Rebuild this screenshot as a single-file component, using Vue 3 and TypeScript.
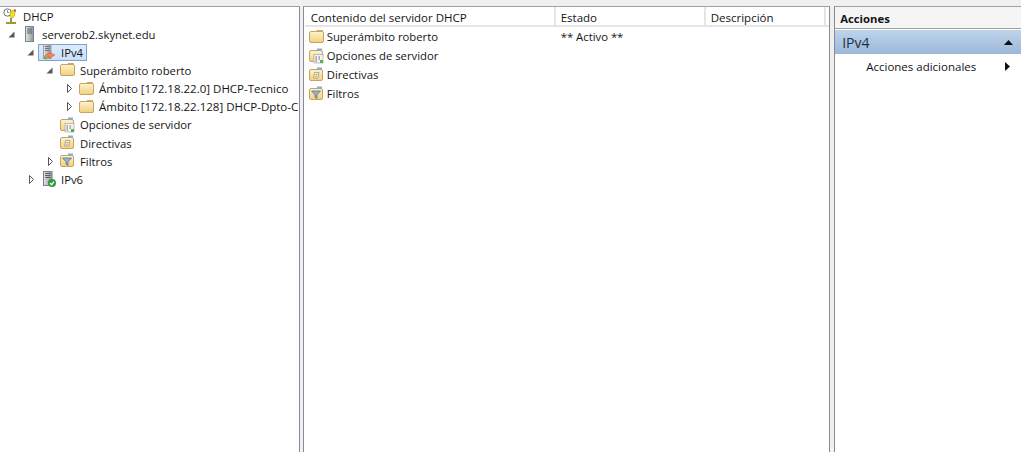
<script setup lang="ts">
type Arrow = 'open' | 'closed' | null

interface TreeRow {
  level: number
  arrow: Arrow
  icon: string
  label: string
  selected?: boolean
  wide?: boolean
}

const tree: TreeRow[] = [
  { level: 0, arrow: null, icon: 'dhcp', label: 'DHCP' },
  { level: 1, arrow: 'open', icon: 'server', label: 'serverob2.skynet.edu' },
  { level: 2, arrow: 'open', icon: 'ipv4', label: 'IPv4', selected: true },
  { level: 3, arrow: 'open', icon: 'folder', label: 'Superámbito roberto' },
  { level: 4, arrow: 'closed', icon: 'folder', label: 'Ámbito [172.18.22.0] DHCP-Tecnico', wide: true },
  { level: 4, arrow: 'closed', icon: 'folder', label: 'Ámbito [172.18.22.128] DHCP-Dpto-C', wide: true },
  { level: 3, arrow: null, icon: 'options', label: 'Opciones de servidor' },
  { level: 3, arrow: null, icon: 'policy', label: 'Directivas' },
  { level: 3, arrow: 'closed', icon: 'filter', label: 'Filtros' },
  { level: 2, arrow: 'closed', icon: 'ipv6', label: 'IPv6' },
]

const items = [
  { icon: 'folder', name: 'Superámbito roberto', state: '** Activo **' },
  { icon: 'options', name: 'Opciones de servidor', state: '' },
  { icon: 'policy', name: 'Directivas', state: '' },
  { icon: 'filter', name: 'Filtros', state: '' },
]

const indent = (row: TreeRow) => (row.level === 0 ? 3 : row.level * 19 - 13)
</script>

<template>
  <div class="console">
    <svg class="defs" width="0" height="0">
      <defs>
        <linearGradient id="fold" x1="0" y1="0" x2="0" y2="1">
          <stop offset="0" stop-color="#fdf3d0" />
          <stop offset="1" stop-color="#f2d07e" />
        </linearGradient>
        <linearGradient id="tower" x1="0" y1="0" x2="1" y2="0">
          <stop offset="0" stop-color="#e4e7ea" />
          <stop offset="1" stop-color="#8b939b" />
        </linearGradient>
        <symbol id="i-folder" viewBox="0 0 16 16">
          <path d="M8 3V1.500h5.500V3z" fill="#f6e3b0" stroke="#c9ab6a" />
          <rect x="0.500" y="2.500" width="14" height="11" rx="1.500" fill="url(#fold)" stroke="#c8a55e" />
        </symbol>
        <symbol id="i-options" viewBox="0 0 16 16">
          <rect x="0.500" y="2.500" width="13" height="11" rx="1.500" fill="url(#fold)" stroke="#c8a55e" />
          <rect x="8" y="0.500" width="5" height="2" fill="#7fb0dc" />
          <rect x="5" y="6.500" width="9" height="8.500" fill="#f4f4f4" stroke="#9a9a9a" stroke-width=".6" />
          <path d="M6.500 9h1.500M9.500 9h1.500M6.500 11h1.500M9.500 11h1.500M6.500 13h1.500" stroke="#666" />
          <rect x="11" y="12" width="3" height="3" fill="#58b24c" />
        </symbol>
        <symbol id="i-policy" viewBox="0 0 16 16">
          <rect x="0.500" y="2.500" width="13" height="11" rx="1.500" fill="url(#fold)" stroke="#c8a55e" />
          <rect x="8" y="0.500" width="5" height="2" fill="#7fb0dc" />
          <path d="M5.500 5.500h4.500l-1 5.500H4.500z" fill="#f8f3e4" stroke="#a8966e" stroke-width=".8" />
          <path d="M6.500 7.500h2M6 9.200h2" stroke="#8a7a5a" stroke-width=".7" />
        </symbol>
        <symbol id="i-filter" viewBox="0 0 16 16">
          <rect x="0.500" y="2.500" width="13" height="11" rx="1.500" fill="url(#fold)" stroke="#c8a55e" />
          <rect x="8" y="0.500" width="5" height="2" fill="#7fb0dc" />
          <path d="M2.500 5h9L8 8.800v3.700L6 11.200V8.800z" fill="#9fb2c4" stroke="#5f7286" stroke-width=".8" />
        </symbol>
        <symbol id="i-server" viewBox="0 0 16 16">
          <rect x="3.500" y="0.500" width="8" height="15" fill="url(#tower)" stroke="#7b828a" />
          <path d="M5 3h5M5 5h5M5 7h5" stroke="#5a6168" />
          <rect x="9" y="12.500" width="2" height="2" fill="#66c94a" />
        </symbol>
        <symbol id="i-ipv4" viewBox="0 0 16 16">
          <rect x="2.500" y="0.500" width="7.500" height="14" fill="url(#tower)" stroke="#9aa0a7" />
          <path d="M4 2.500h4.500M4 4.500h4.500M4 6.500h4.500" stroke="#6a7178" />
          <path d="M3 15c0-3.500 2-5.500 5-5.500V8l6 3-6 3.500v-2c-2 0-3.500.8-5 2.500z" fill="#ee8458" stroke="#d0633a" stroke-width=".5" />
          <circle cx="5" cy="14" r="1.500" fill="#66b85a" />
        </symbol>
        <symbol id="i-ipv6" viewBox="0 0 16 16">
          <rect x="2.500" y="0.500" width="8.500" height="14" fill="url(#tower)" stroke="#7b828a" />
          <path d="M4 2.500h5.500M4 4.500h5.500M4 6.500h5.500" stroke="#5a6168" />
          <circle cx="11" cy="12" r="4" fill="#2f9a3a" />
          <path d="M9 12l1.600 1.700 2.400-3" fill="none" stroke="#fff" stroke-width="1.300" />
        </symbol>
        <symbol id="i-dhcp" viewBox="0 0 16 16">
          <circle cx="4.500" cy="4.500" r="3.700" fill="#fff" stroke="#707070" />
          <path d="M4.500 2.200v2.300h1.800" fill="none" stroke="#707070" stroke-width=".8" />
          <path d="M7 6l2.500-4 2.500.5-.5 5-2 2.500-2.500-1.500z" fill="#f4e416" stroke="#a09a00" stroke-width=".6" />
          <rect x="11" y="1.500" width="2" height="2" fill="#e04030" />
          <path d="M8 10v4" stroke="#7a7a30" stroke-width="1.600" />
          <path d="M3 15h10" stroke="#8f8f20" stroke-width="1.800" />
        </symbol>
      </defs>
    </svg>

    <aside class="pane tree">
      <div v-for="row in tree" :key="row.label" class="tree-row" :style="{ paddingLeft: indent(row) + 'px' }">
        <span v-if="row.level > 0" class="arrow-slot">
          <svg v-if="row.arrow === 'open'" class="arrow-open" width="7" height="7" viewBox="0 0 7 7">
            <path d="M6.500 0.500V6.500H0.500z" fill="#595959" />
          </svg>
          <svg v-else-if="row.arrow === 'closed'" class="arrow-closed" width="5" height="9" viewBox="0 0 5 9">
            <path d="M0.500 0.500L4.500 4.500L0.500 8.500z" fill="#fff" stroke="#555" />
          </svg>
        </span>
        <span class="node" :class="{ selected: row.selected, wide: row.wide }">
          <svg class="icon" width="16" height="16"><use :href="'#i-' + row.icon" /></svg>
          <span class="node-label">{{ row.label }}</span>
        </span>
      </div>
    </aside>

    <main class="pane list">
      <div class="list-head">
        <div class="col col-name">Contenido del servidor DHCP</div>
        <div class="col col-state">Estado</div>
        <div class="col col-desc">Descripción</div>
      </div>
      <div v-for="item in items" :key="item.name" class="list-row">
        <div class="cell-name">
          <svg class="icon" width="16" height="16"><use :href="'#i-' + item.icon" /></svg>
          <span>{{ item.name }}</span>
        </div>
        <div class="cell-state">{{ item.state }}</div>
      </div>
    </main>

    <aside class="pane actions">
      <div class="actions-title">Acciones</div>
      <div class="actions-band">
        <span>IPv4</span>
        <svg width="9" height="5" viewBox="0 0 9 5"><path d="M4.500 0L9 5H0z" fill="#111" /></svg>
      </div>
      <div class="actions-item">
        <span>Acciones adicionales</span>
        <svg width="5" height="9" viewBox="0 0 5 9"><path d="M0 0L5 4.500L0 9z" fill="#111" /></svg>
      </div>
    </aside>
  </div>
</template>

<style>
html,
body {
  margin: 0;
  background: #f0f0f0;
}
</style>

<style scoped>
.defs {
  position: absolute;
}

.console {
  display: flex;
  gap: 3px;
  width: 1021px;
  height: 452px;
  padding-top: 6px;
  box-sizing: border-box;
  overflow: hidden;
  background: #f0f0f0;
  font-family: "Open Sans", "Liberation Sans", sans-serif;
  font-size: 11.3px;
  color: #141414;
}

.pane {
  background: #fff;
  box-sizing: border-box;
  border-top: 1px solid #a0a0a0;
  overflow: hidden;
}

.tree {
  width: 300px;
  border-right: 1px solid #8a8a96;
}

.list {
  width: 528px;
  border-left: 1px solid #8a8a96;
  border-right: 1px solid #8a8a96;
  padding-left: 1px;
}

.actions {
  width: 187px;
  margin-left: 1px;
  border-left: 1px solid #8a8a96;
}

.tree-row {
  display: flex;
  align-items: center;
  height: 18.15px;
  white-space: nowrap;
}

.arrow-slot {
  display: flex;
  align-items: center;
  flex: none;
  width: 16px;
}

.arrow-open {
  margin-left: 2px;
}

.arrow-closed {
  margin-left: 4px;
}

.node {
  display: flex;
  align-items: center;
  gap: 4px;
  height: 17px;
  box-sizing: border-box;
}

.node.wide {
  font-size: 11.5px;
}

.icon {
  flex: none;
}

.node.selected {
  margin-left: -3px;
  padding: 0 3px 0 2px;
  border: 1px solid #7da2ce;
  background: linear-gradient(#dcebfc, #c9e0f9);
}

.list-head {
  display: flex;
  height: 18px;
  border-bottom: 2px solid #e5e5e5;
  font-size: 11.5px;
}

.col {
  box-sizing: border-box;
  padding: 1px 0 0 5px;
  line-height: 19px;
  border-right: 2px solid #e5e5e5;
}

.col-name {
  width: 251px;
  padding-left: 6px;
}

.col-state {
  width: 150px;
}

.col-desc {
  width: 120px;
}

.list-row {
  display: flex;
  align-items: center;
  height: 19px;
}

.cell-name {
  display: flex;
  align-items: center;
  gap: 2px;
  width: 251px;
  padding-left: 4px;
  box-sizing: border-box;
}

.cell-state {
  padding-left: 5px;
}

.actions-title {
  height: 21px;
  line-height: 23px;
  padding-left: 5px;
  font-weight: 700;
  background: #f5f5f5;
  border-bottom: 1px solid #a0a0a0;
}

.actions-band {
  display: flex;
  align-items: center;
  justify-content: space-between;
  height: 24px;
  margin-top: 1px;
  padding: 1px 8px 0 7px;
  box-sizing: border-box;
  font-size: 14px;
  color: #22303f;
  background: linear-gradient(#bdd4eb, #9cb8d8);
}

.actions-item {
  display: flex;
  align-items: center;
  justify-content: space-between;
  height: 25px;
  padding: 0 11px 0 31px;
  font-size: 11.5px;
}
</style>
